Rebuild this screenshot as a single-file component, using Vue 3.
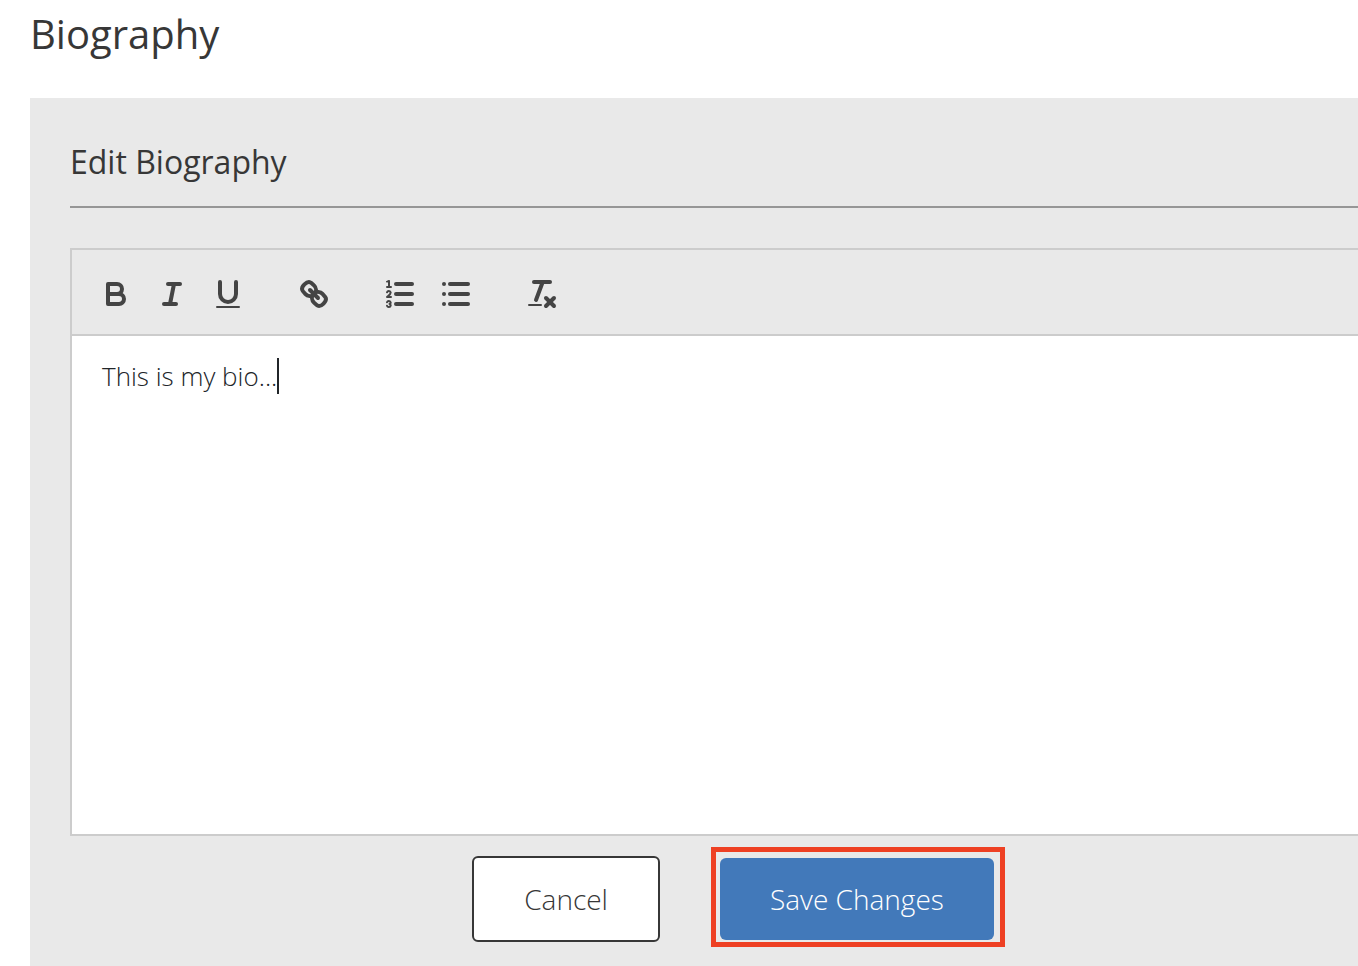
<script setup>
import { ref, nextTick, onMounted } from 'vue'

const bio = ref('This is my bio...')
const field = ref(null)
const caretLeft = ref(0)

const groups = [
  [
    {
      name: 'Bold',
      paths: [
        'M5,4H9.5A2.5,2.5,0,0,1,12,6.5v0A2.5,2.5,0,0,1,9.5,9H5V4Z',
        'M5,9h5.5A2.5,2.5,0,0,1,13,11.5v0A2.5,2.5,0,0,1,10.5,14H5V9Z'
      ]
    },
    { name: 'Italic', paths: ['M7,4H13', 'M5,14H11', 'M8,14L10,4'] },
    {
      name: 'Underline',
      paths: ['M5,3V9a4.012,4.012,0,0,0,4,4H9a4.012,4.012,0,0,0,4-4V3'],
      bar: { x: 3, y: 15, width: 12 }
    }
  ],
  [
    {
      name: 'Link',
      paths: [
        'M7,7L11,11',
        'M8.9,4.577a3.476,3.476,0,0,1,.36,4.679A3.476,3.476,0,0,1,4.577,8.9C3.185,7.5,2.035,6.4,4.217,4.217S7.5,3.185,8.9,4.577Z',
        'M13.423,9.1a3.476,3.476,0,0,0-4.679-.36,3.476,3.476,0,0,0,.36,4.679c1.392,1.392,2.5,2.542,4.679.36S14.815,10.5,13.423,9.1Z'
      ]
    }
  ],
  [
    {
      name: 'Numbered list',
      paths: ['M7,4H15', 'M7,9H15', 'M7,14H15'],
      thin: [
        'M2.5,5.5H4.5',
        'M4.5,10.5h-2c0-.234,1.85-1.076,1.85-2.234A0.959,0.959,0,0,0,2.5,8.156',
        'M2.5,14.846a0.959,0.959,0,0,0,1.85-.109A0.7,0.7,0,0,0,3.75,14a0.688,0.688,0,0,0,.6-0.736,0.959,0.959,0,0,0-1.85-.109'
      ],
      fill: 'M3.5,6A0.5,0.5,0,0,1,3,5.5V3.085l-0.276.138A0.5,0.5,0,0,1,2.053,3c-0.124-.247-0.023-0.324.224-0.447l1-.5A0.5,0.5,0,0,1,4,2.5v3A0.5,0.5,0,0,1,3.5,6Z'
    },
    {
      name: 'Bulleted list',
      paths: ['M6,4H15', 'M6,9H15', 'M6,14H15', 'M3,4H3', 'M3,9H3', 'M3,14H3']
    }
  ],
  [
    {
      name: 'Clear formatting',
      paths: ['M5,3H13', 'M6,12L9.35,3', 'M11,11L15,15', 'M15,11L11,15'],
      bar: { x: 2, y: 14, width: 7 }
    }
  ]
]

async function placeCaret() {
  await nextTick()
  const style = getComputedStyle(field.value)
  const context = document.createElement('canvas').getContext('2d')
  context.font = `${style.fontWeight} ${style.fontSize} ${style.fontFamily}`
  caretLeft.value =
    parseInt(style.paddingLeft) + Math.round(context.measureText(bio.value).width)
}

onMounted(placeCaret)
</script>

<template>
  <main class="page">
    <h1>Biography</h1>
    <form class="panel" @submit.prevent>
      <h2 id="edit-title">Edit Biography</h2>
      <div class="editor">
        <div class="toolbar" role="toolbar" aria-label="Formatting">
          <div v-for="(group, i) in groups" :key="i" class="group">
            <button v-for="tool in group" :key="tool.name" type="button" class="tool" :aria-label="tool.name">
              <svg viewBox="0 0 18 18" aria-hidden="true">
                <path v-for="d in tool.paths" :key="d" class="stroke" :d="d" />
                <path v-for="d in tool.thin" :key="d" class="stroke thin" :d="d" />
                <path v-if="tool.fill" class="fill" :d="tool.fill" />
                <rect v-if="tool.bar" class="fill" v-bind="tool.bar" height="1" rx="0.5" />
              </svg>
            </button>
          </div>
        </div>
        <div class="writing">
          <textarea ref="field" v-model="bio" aria-labelledby="edit-title" spellcheck="false" @input="placeCaret"></textarea>
          <span class="caret" :style="{ left: caretLeft + 'px' }"></span>
        </div>
      </div>
      <div class="actions">
        <button type="button" class="button cancel">Cancel</button>
        <div class="highlight">
          <button type="submit" class="button save">Save Changes</button>
        </div>
      </div>
    </form>
  </main>
</template>

<style>
body {
  background: #fff;
}
</style>

<style scoped>
.page {
  box-sizing: border-box;
  min-height: 100vh;
  display: flex;
  flex-direction: column;
  padding-left: 30px;
  font-family: "Open Sans", sans-serif;
  color: #373737;
}

h1,
h2 {
  margin: 0;
  font-weight: 400;
}

h1 {
  padding: 6px 0 36px;
  font-size: 40px;
  line-height: 56px;
}

.panel {
  flex: 1;
  padding: 40px 0 24px 40px;
  background: #e9e9e9;
}

h2 {
  margin-bottom: 40px;
  padding-bottom: 20px;
  border-bottom: 2px solid #969696;
  font-size: 32px;
  line-height: 48px;
}

.editor {
  border: 2px solid #ccc;
  border-right: 0;
}

.toolbar {
  display: flex;
  gap: 30px;
  padding: 20px 16px 16px;
  border-bottom: 2px solid #ccc;
}

.group {
  display: flex;
}

.tool {
  width: 56px;
  height: 48px;
  padding: 6px 10px;
  border: 0;
  background: none;
  cursor: pointer;
}

.tool svg {
  display: block;
  width: 36px;
  height: 36px;
}

.stroke {
  fill: none;
  stroke: #444;
  stroke-width: 2;
  stroke-linecap: round;
  stroke-linejoin: round;
}

.thin {
  stroke-width: 1;
}

.fill {
  fill: #444;
}

.writing {
  position: relative;
  background: #fff;
}

textarea {
  display: block;
  box-sizing: border-box;
  width: 100%;
  height: 498px;
  padding: 22px 30px;
  border: 0;
  outline: 0;
  resize: none;
  background: transparent;
  color: #212529;
  caret-color: transparent;
  font-family: inherit;
  font-size: 26px;
  font-weight: 300;
  line-height: 37px;
}

.caret {
  position: absolute;
  top: 22px;
  width: 2px;
  height: 36px;
  background: #212529;
}

.actions {
  display: flex;
  align-items: center;
  justify-content: center;
  gap: 60px;
  padding: 20px 0 0 38px;
}

.button {
  display: block;
  border-radius: 6px;
  font-family: inherit;
  font-size: 28px;
  font-weight: 300;
  line-height: 42px;
  cursor: pointer;
}

.cancel {
  padding: 20px 50px;
  border: 2px solid #373737;
  background: #fff;
  color: #373737;
}

.save {
  padding: 20px 50px;
  border: 0;
  background: #4279ba;
  color: #fff;
}

.highlight {
  position: relative;
}

.highlight::after {
  content: "";
  position: absolute;
  inset: -11px -11px -7px -9px;
  border: 5px solid #ee4023;
  pointer-events: none;
}
</style>
